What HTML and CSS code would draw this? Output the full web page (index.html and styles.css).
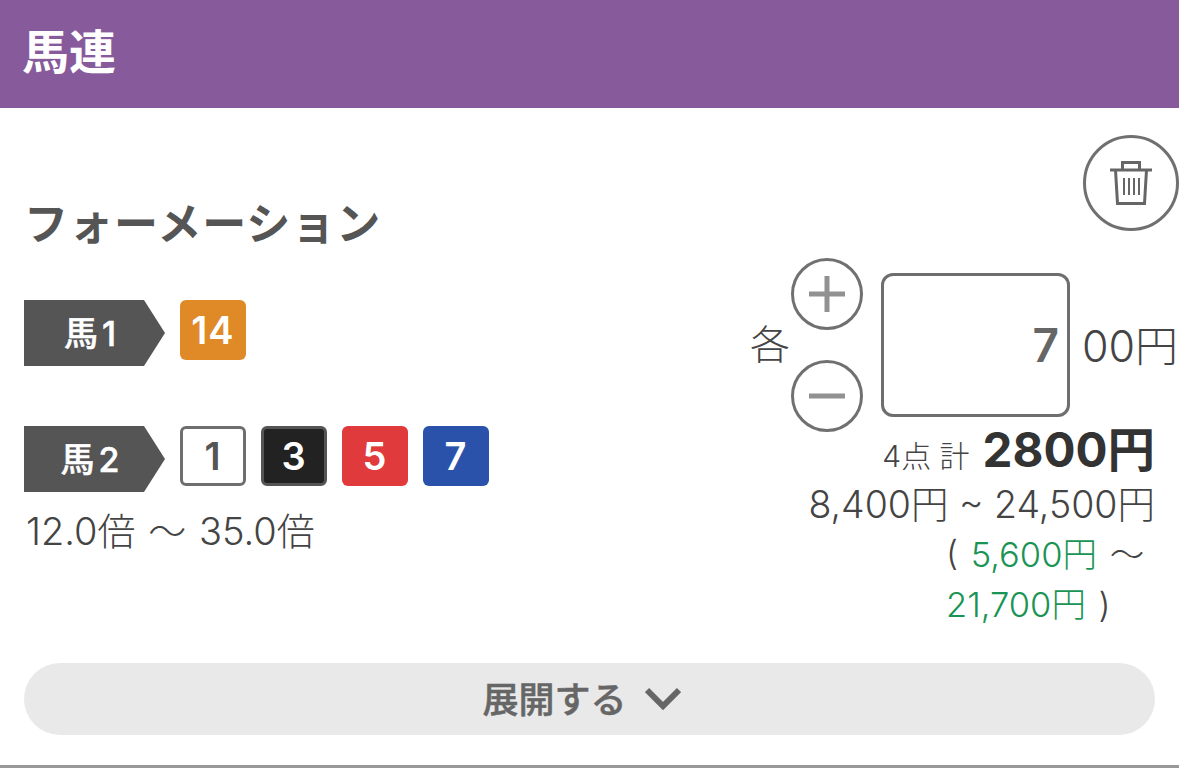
FILE: index.html
```html
<!DOCTYPE html>
<html lang="ja">
<head>
    <meta charset="UTF-8">
    <meta name="viewport" content="width=device-width, initial-scale=1.0">
    <title>馬連</title>
    <link rel="stylesheet" href="styles.css">
</head>
<body>
    <header class="header">馬連</header>

    <section class="ticket">
        <div class="ticket-main">
            <div class="ticket-left">
                <h2 class="ticket-type">フォーメーション</h2>
                <div class="horse-row">
                    <div class="horse-label">馬1</div>
                    <span class="num num-orange">14</span>
                </div>
                <div class="horse-row horse-row-second">
                    <div class="horse-label">馬2</div>
                    <span class="num num-white">1</span>
                    <span class="num num-black">3</span>
                    <span class="num num-red">5</span>
                    <span class="num num-blue">7</span>
                </div>
                <p class="odds">12.0倍 〜 35.0倍</p>
            </div>

            <div class="ticket-right">
                <button class="trash-btn" type="button" aria-label="削除">
                    <svg width="42" height="44" viewBox="0 0 42 44" fill="none" stroke="#666" stroke-width="3">
                        <path d="M0 9H42"/>
                        <path d="M12.500 8V1.500H29.500V8"/>
                        <path d="M5.500 9L7.500 42.500H34.500L36.500 9"/>
                        <path d="M14 17V34M19 17V34M24 17V34M29 17V34" stroke-width="2"/>
                    </svg>
                </button>

                <div class="amount-row">
                    <span class="each">各</span>
                    <div class="stepper">
                        <button class="step-btn" type="button" aria-label="増やす">
                            <svg width="36" height="36" viewBox="0 0 36 36" stroke="#919191" stroke-width="5"><path d="M0 18H36M18 0V36"/></svg>
                        </button>
                        <button class="step-btn" type="button" aria-label="減らす">
                            <svg width="36" height="36" viewBox="0 0 36 36" stroke="#919191" stroke-width="5"><path d="M0 18H36"/></svg>
                        </button>
                    </div>
                    <div class="amount-box">7</div>
                    <span class="amount-unit">00円</span>
                </div>

                <div class="totals">
                    <p class="total-line"><span class="total-small">4点 計</span><strong class="total-price">2800円</strong></p>
                    <p class="payout">8,400円 ~ 24,500円</p>
                    <p class="profit">( <span class="green">5,600円</span> 〜<br><span class="green">21,700円</span> )</p>
                </div>
            </div>
        </div>

        <button class="expand-btn" type="button">
            展開する
            <svg class="chevron" width="36" height="24" viewBox="0 0 36 24" fill="none" stroke="#666" stroke-width="6"><path d="M2 3L18 19L34 3"/></svg>
        </button>
    </section>
</body>
</html>
```

FILE: styles.css
```css
body {
    margin: 0;
    background-color: #fff;
    color: #444;
    font-family: "Inter", "Noto Sans CJK JP", sans-serif;
}

p,
h2 {
    margin: 0;
}

button {
    padding: 0;
    background: none;
    font-family: inherit;
    cursor: pointer;
}

.header {
    height: 108px;
    padding-left: 22px;
    background-color: #875a9b;
    color: #fff;
    font-size: 47px;
    font-weight: 700;
    line-height: 103px;
}

.ticket {
    height: 657px;
    border-bottom: 3px solid #999;
}

.ticket-main {
    display: flex;
    justify-content: space-between;
    height: 555px;
}

.ticket-left {
    padding: 90px 0 0 24px;
}

.ticket-type {
    height: 102px;
    color: #555;
    font-size: 44px;
    font-weight: 700;
    line-height: 52px;
    letter-spacing: 1px;
}

.horse-row {
    display: flex;
    gap: 15px;
}

.horse-row-second {
    margin-top: 60px;
}

.horse-label {
    width: 141px;
    height: 66px;
    padding-right: 5px;
    box-sizing: border-box;
    background-color: #555;
    clip-path: polygon(0 0, 120px 0, 100% 50%, 120px 100%, 0 100%);
    color: #fff;
    font-size: 34px;
    font-weight: 500;
    line-height: 68px;
    letter-spacing: 4px;
    text-align: center;
    -webkit-text-stroke: 0.5px #fff;
}

.num {
    width: 66px;
    height: 60px;
    box-sizing: border-box;
    border-radius: 6px;
    color: #fff;
    font-size: 38px;
    font-weight: 600;
    line-height: 60px;
    letter-spacing: 1px;
    text-align: center;
}

.num-orange {
    background-color: #df8a27;
}

.num-white {
    border: 3px solid #6e6e6e;
    color: #555;
    line-height: 54px;
}

.num-black {
    border: 3px solid #555;
    background-color: #222;
    line-height: 54px;
}

.num-red {
    background-color: #e03a3c;
}

.num-blue {
    background-color: #2a52ab;
}

.odds {
    margin-top: 14px;
    padding-left: 2px;
    font-size: 38px;
    font-weight: 300;
    line-height: 50px;
    word-spacing: 2px;
}

.ticket-right {
    display: flex;
    flex-direction: column;
    align-items: flex-end;
    width: 429px;
    padding-top: 27px;
}

.trash-btn {
    display: flex;
    justify-content: center;
    align-items: center;
    width: 96px;
    height: 96px;
    border: 3px solid #707070;
    border-radius: 50%;
}

.amount-row {
    display: flex;
    align-items: center;
    width: 429px;
    margin-top: 27px;
}

.each {
    width: 41px;
    font-size: 40px;
    font-weight: 300;
    line-height: 46px;
}

.stepper {
    display: flex;
    flex-direction: column;
    gap: 30px;
}

.step-btn {
    display: flex;
    justify-content: center;
    align-items: center;
    width: 72px;
    height: 72px;
    border: 3px solid #707070;
    border-radius: 50%;
}

.amount-box {
    width: 189px;
    height: 144px;
    margin-left: 18px;
    padding-right: 8px;
    box-sizing: border-box;
    border: 3px solid #6e6e6e;
    border-radius: 12px;
    color: #666;
    font-size: 46px;
    font-weight: 600;
    line-height: 138px;
    text-align: right;
}

.amount-unit {
    margin-left: 12px;
    margin-bottom: 4px;
    font-size: 43px;
    font-weight: 300;
    white-space: nowrap;
}

.totals {
    width: 405px;
    padding-right: 24px;
    text-align: right;
}

.total-line {
    margin-top: -8px;
    line-height: 52px;
}

.total-small {
    margin-right: 13px;
    font-size: 30px;
    font-weight: 300;
}

.total-price {
    color: #333;
    font-size: 47.500px;
    font-weight: 700;
}

.payout {
    margin-top: -6px;
    font-size: 37.500px;
    font-weight: 300;
    line-height: 48px;
}

.profit {
    width: 209px;
    margin: 1px 0 0 auto;
    font-size: 34.500px;
    font-weight: 300;
    line-height: 50px;
    word-spacing: 3px;
    text-align: left;
}

.green {
    color: #1a9455;
}

.expand-btn {
    display: flex;
    justify-content: center;
    align-items: center;
    gap: 18px;
    width: 1131px;
    height: 72px;
    margin-left: 24px;
    padding: 0 16px 4px 0;
    border: none;
    border-radius: 36px;
    background-color: #e9e9e9;
    color: #666;
    font-size: 36px;
    font-weight: 500;
    -webkit-text-stroke: 0.5px #666;
}

.chevron {
    margin-top: 4px;
}
```
